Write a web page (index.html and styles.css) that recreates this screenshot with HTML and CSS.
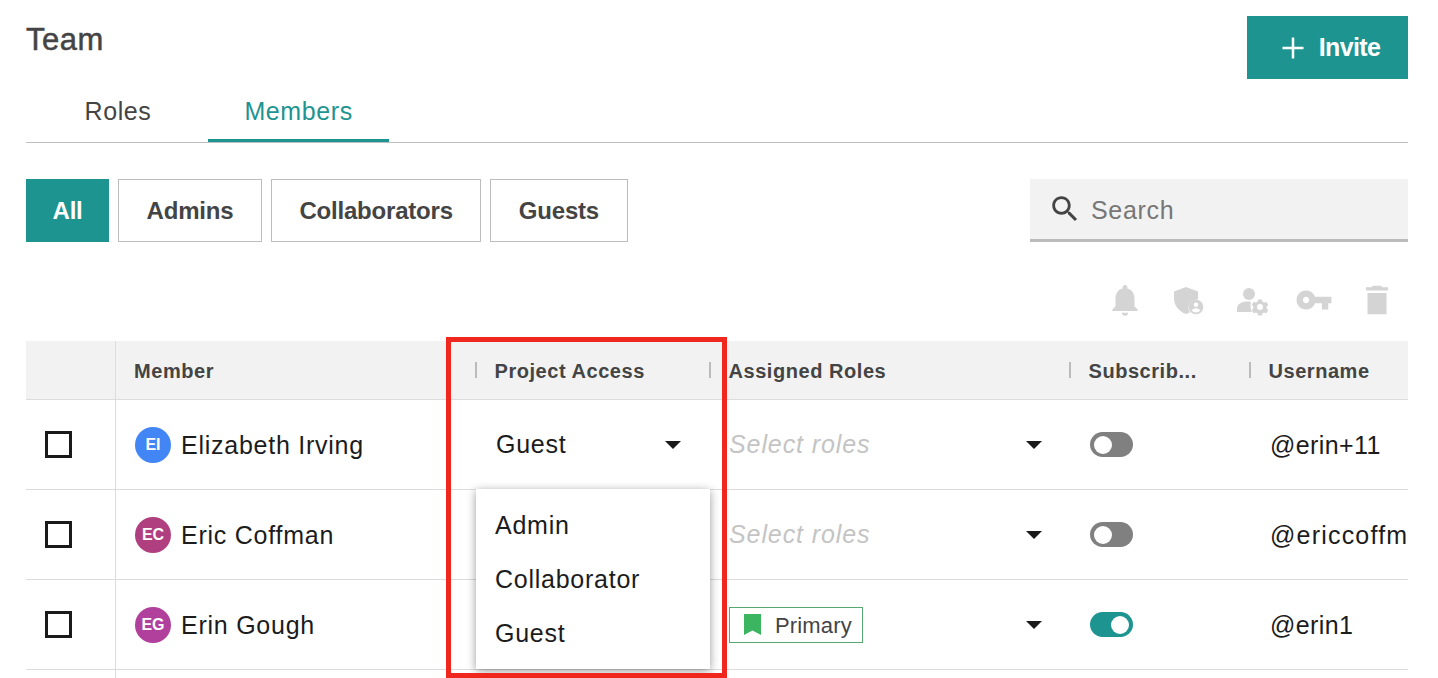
FILE: index.html
```html
<!DOCTYPE html>
<html lang="en">
<head>
<meta charset="utf-8">
<title>Team</title>
<link rel="stylesheet" href="styles.css">
</head>
<body>
<div class="page">
  <header class="top">
    <h1 class="title">Team</h1>
    <button class="invite"><svg class="plus" viewBox="0 0 24 24"><path d="M12 1.500v21M1.500 12h21"/></svg>Invite</button>
  </header>
  <nav class="tabs">
    <a class="tab">Roles</a>
    <a class="tab active">Members</a>
  </nav>
  <div class="filters">
    <div class="pills">
      <button class="pill on">All</button>
      <button class="pill">Admins</button>
      <button class="pill">Collaborators</button>
      <button class="pill">Guests</button>
    </div>
    <div class="search">
      <svg class="search-icon" viewBox="0 0 24 24"><path d="M15.500 14h-.79l-.28-.27C15.410 12.590 16 11.110 16 9.500 16 5.910 13.090 3 9.500 3S3 5.910 3 9.500 5.910 16 9.500 16c1.610 0 3.090-.59 4.230-1.570l.27.28v.79l5 4.990L20.490 19l-4.990-5zm-6 0C7.010 14 5 11.990 5 9.500S7.010 5 9.500 5 14 7.010 14 9.500 11.990 14 9.500 14z"/></svg>
      <span class="search-text">Search</span>
    </div>
  </div>
  <div class="actions">
    <svg class="action" viewBox="0 0 24 24"><path d="M12 22c1.100 0 2-.9 2-2h-4c0 1.100.89 2 2 2zm6-6v-5c0-3.070-1.640-5.640-4.500-6.320V4c0-.83-.67-1.500-1.500-1.500s-1.500.67-1.500 1.500v.68C7.630 5.360 6 7.920 6 11v5l-2 2v1h16v-1l-2-2z"/></svg>
    <svg class="action" viewBox="0 0 38 38"><path d="M17 6l12 4.500v8c-5.500 0-9.500 3.200-9.500 7.800 0 2 .6 3.700 1.700 5-1.300.7-2.800 1.200-4.200 1.700C10 30.500 5 24.500 5 17.500V10.500z"/><path fill-rule="evenodd" d="M27 18.700a7.300 7.300 0 1 0 0 14.600a7.300 7.300 0 1 0 0-14.600zM27 21.500a2.300 2.300 0 1 1 0 4.600a2.300 2.300 0 1 1 0-4.600zM22.800 29.600c.8-1.500 2.500-2.300 4.200-2.300s3.400.8 4.200 2.300c-1 1.200-2.500 1.900-4.200 1.900s-3.200-.7-4.200-1.900z"/></svg>
    <svg class="action" viewBox="0 0 38 38"><circle cx="17" cy="13" r="6"/><path d="M5 31v-3.500c0-4.500 5-7 10.500-7 1.200 0 2.400.1 3.500.4-.9 3.300-.6 7.100 1 10.100z"/><path fill-rule="evenodd" d="M26 18.500h4l.5 2.200 1.700.9 2.100-.8 2 3.300-1.600 1.400v2l1.600 1.400-2 3.300-2.100-.8-1.700.9-.5 2.200h-4l-.5-2.200-1.700-.9-2.100.8-2-3.300 1.600-1.400v-2l-1.600-1.400 2-3.300 2.100.8 1.700-.9zM28 23a3 3 0 1 0 0 6a3 3 0 1 0 0-6z"/></svg>
    <svg class="action" viewBox="0 0 24 24"><path d="M12.650 10C11.830 7.670 9.610 6 7 6c-3.310 0-6 2.690-6 6s2.690 6 6 6c2.610 0 4.830-1.670 5.650-4H17v4h4v-4h2v-4H12.650zM7 14c-1.100 0-2-.9-2-2s.9-2 2-2 2 .9 2 2-.9 2-2 2z"/></svg>
    <svg class="action" viewBox="0 0 24 24"><path d="M6 7.500h12V21H6zM19 4h-3.500l-1-1h-5l-1 1H5v2h14V4z"/></svg>
  </div>
  <div class="table">
    <div class="row head">
      <div class="cell"></div>
      <div class="cell member"><span class="th">Member</span></div>
      <div class="cell"><i class="sep"></i><span class="th">Project Access</span></div>
      <div class="cell"><i class="sep"></i><span class="th">Assigned Roles</span></div>
      <div class="cell"><i class="sep"></i><span class="th">Subscrib...</span></div>
      <div class="cell"><i class="sep"></i><span class="th">Username</span></div>
    </div>
    <div class="row">
      <div class="cell check"><span class="box"></span></div>
      <div class="cell member"><span class="avatar blue">EI</span><span class="name">Elizabeth Irving</span></div>
      <div class="cell access">
        <span class="value">Guest</span><i class="caret"></i>
        <ul class="menu">
          <li class="item">Admin</li>
          <li class="item">Collaborator</li>
          <li class="item">Guest</li>
        </ul>
      </div>
      <div class="cell roles"><span class="placeholder">Select roles</span><i class="caret"></i></div>
      <div class="cell"><span class="toggle"></span></div>
      <div class="cell user">@erin+11</div>
    </div>
    <div class="row">
      <div class="cell check"><span class="box"></span></div>
      <div class="cell member"><span class="avatar rose">EC</span><span class="name">Eric Coffman</span></div>
      <div class="cell access"></div>
      <div class="cell roles"><span class="placeholder">Select roles</span><i class="caret"></i></div>
      <div class="cell"><span class="toggle"></span></div>
      <div class="cell user wide">@ericcoffm</div>
    </div>
    <div class="row">
      <div class="cell check"><span class="box"></span></div>
      <div class="cell member"><span class="avatar plum">EG</span><span class="name">Erin Gough</span></div>
      <div class="cell access"></div>
      <div class="cell roles"><span class="tag"><svg class="bookmark" viewBox="0 0 17 21"><path d="M0 0h17v21l-8.500-4.500L0 21z"/></svg>Primary</span><i class="caret"></i></div>
      <div class="cell"><span class="toggle on"></span></div>
      <div class="cell user">@erin1</div>
    </div>
    <div class="row">
      <div class="cell"></div>
      <div class="cell member"></div>
    </div>
  </div>
</div>
<div class="highlight"></div>
</body>
</html>
```
FILE: styles.css
```css
* { box-sizing: border-box; }
html, body { margin: 0; height: 678px; overflow: hidden; background: #fff; }
body { font-family: "Liberation Sans", Arial, sans-serif; color: #1c1c1c; position: relative; }
button { font-family: inherit; cursor: pointer; }
.page { padding: 0 30px 0 26px; }

.top { display: flex; justify-content: space-between; padding-top: 16px; height: 79px; }
.title { margin: 7px 0 0; font-size: 31px; line-height: 34px; font-weight: 400; letter-spacing: .5px; color: #444; -webkit-text-stroke: .5px #444; }
.invite { width: 161px; height: 63px; border: 0; background: #1d9490; color: #fff; font-size: 25px; font-weight: 700; letter-spacing: -.6px; display: flex; align-items: center; justify-content: center; gap: 14px; padding: 0 0 0 6px; }
.plus { width: 24px; height: 24px; fill: none; stroke: #fff; stroke-width: 2.500; }

.tabs { display: flex; gap: 20px; height: 64px; padding-left: 22px; border-bottom: 1px solid #bdbdbd; margin-bottom: 36px; }
.tab { height: 63px; padding: 0 36.500px; font-size: 25px; line-height: 65px; letter-spacing: .6px; color: #444; border-bottom: 3px solid transparent; }
.tab.active { color: #1d9490; border-bottom-color: #1d9490; }

.filters { display: flex; justify-content: space-between; height: 63px; }
.pills { display: flex; gap: 9px; }
.pill { height: 63px; padding: 0 27.500px; border: 1px solid #bdbdbd; background: #fff; font-size: 24px; font-weight: 700; letter-spacing: -.2px; color: #444; }
.pill.on { padding: 0 25.500px; background: #1d9490; border-color: #1d9490; color: #fff; }
.search { width: 378px; background: #f2f2f2; border-bottom: 3px solid #bbb; display: flex; align-items: center; padding-left: 18px; gap: 9px; }
.search-icon { width: 34px; height: 34px; fill: #444; }
.search-text { font-size: 25px; letter-spacing: .7px; color: #777; padding-top: 2px; }

.actions { display: flex; justify-content: flex-end; gap: 25px; padding-right: 12px; margin: 39px 0 22px; }
.action { width: 38px; height: 38px; fill: #d4d4d4; }

.table { overflow: hidden; height: 337px; }
.row { display: grid; grid-template-columns: 89px 360px 234px 360px 180px 180px; height: 90px; border-bottom: 1px solid #dcdcdc; }
.row.head { height: 59px; background: #f2f2f2; }
.cell { display: flex; align-items: center; min-width: 0; white-space: nowrap; }
.head .cell { gap: 17.500px; }
.member { border-left: 1px solid #dcdcdc; padding-left: 19px; }
.head .member { padding-left: 18px; }
.sep { width: 2px; height: 16px; background: #bbb; }
.th { font-size: 20px; font-weight: 700; letter-spacing: .55px; color: #444; padding-top: 2px; }

.check { padding-left: 19px; }
.box { width: 27px; height: 27px; border: 3px solid #1a1a1a; }
.avatar { width: 36px; height: 36px; margin-right: 10px; border-radius: 50%; color: #fff; font-size: 16px; font-weight: 700; display: flex; align-items: center; justify-content: center; }
.blue { background: #4285f4; }
.rose { background: #b03f80; }
.plum { background: #b0409c; }
.name, .value, .item { font-size: 25px; letter-spacing: .75px; color: #1c1c1c; }
.name { padding-top: 2px; }
.user { font-size: 25px; letter-spacing: .4px; color: #1c1c1c; padding-left: 21px; padding-top: 2px; }
.user.wide { letter-spacing: 1.200px; }

.access { position: relative; padding-left: 21px; padding-right: 28px; justify-content: space-between; }
.caret { width: 0; height: 0; border-style: solid; border-width: 8px 8px 0; border-color: #1a1a1a transparent transparent; }
.menu { position: absolute; z-index: 2; top: 89px; left: 1px; width: 234px; height: 180px; margin: 0; padding: 9px 0; list-style: none; background: #fff; box-shadow: 0 2px 9px rgba(0, 0, 0, .4); }
.item { height: 54px; line-height: 54px; padding-left: 19px; }

.roles { padding-right: 27px; justify-content: space-between; padding-left: 20px; }
.placeholder { font-size: 25px; font-style: italic; letter-spacing: .9px; color: #c4c4c4; }
.tag { height: 36px; width: 134px; display: flex; align-items: center; padding: 2px 0 0 14px; gap: 14px; border: 1px solid #55a970; font-size: 22px; letter-spacing: .15px; color: #444; }
.bookmark { width: 17px; height: 21px; margin-top: -2px; fill: #3cb561; }

.toggle { width: 43px; height: 25px; margin-left: 21px; border-radius: 13px; background: #808080; display: flex; align-items: center; padding: 0 4px; }
.toggle::before { content: ""; width: 18px; height: 18px; border-radius: 50%; background: #fff; }
.toggle.on { background: #1d9490; justify-content: flex-end; }

.highlight { position: absolute; left: 446px; top: 337px; width: 281px; height: 341px; border: 5px solid #f0271f; z-index: 3; }
```
